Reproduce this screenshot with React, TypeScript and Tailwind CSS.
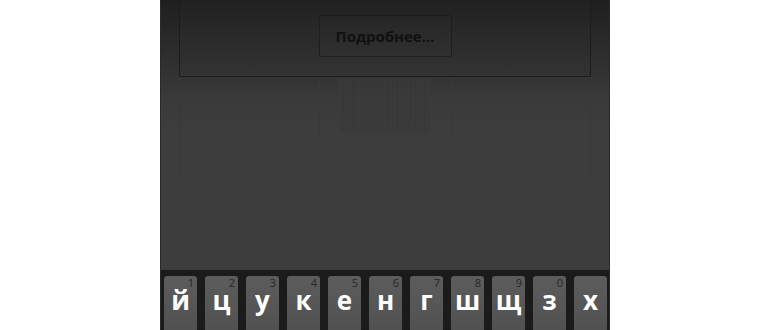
const KEYS = [
	{ ch: "й", num: "1" },
	{ ch: "ц", num: "2" },
	{ ch: "у", num: "3" },
	{ ch: "к", num: "4" },
	{ ch: "е", num: "5" },
	{ ch: "н", num: "6" },
	{ ch: "г", num: "7" },
	{ ch: "ш", num: "8" },
	{ ch: "щ", num: "9" },
	{ ch: "з", num: "0" },
	{ ch: "х", num: "" },
];

export default function App() {
	return (
		<div className="w-[770px] h-[330px] bg-white flex justify-center overflow-hidden" style={{ fontFamily: '"Open Sans", "Noto Sans", sans-serif' }}>
			<div className="w-[450px] h-[330px] flex flex-col border-l border-r border-[#2a2a2a] bg-[#3d3d3d]">
				{/* upper screen */}
				<div className="h-[270px] shrink-0 bg-[linear-gradient(to_bottom,#1f1f1f_0px,#2f2f2f_60px,#3a3a3a_100px,#3d3d3d_130px)] flex flex-col">
					<div className="ml-[18px] w-[412px] h-[77px] shrink-0 border-l border-r border-b border-[#1c1c1c] flex justify-center pt-[15px] bg-[linear-gradient(to_bottom,#212121,#333333)]">
						<button className="w-[133px] h-[42px] border border-[#1e1e1e] rounded-[2px] bg-[linear-gradient(to_bottom,#262626,#303030)] text-[#101010] font-bold text-[15px] leading-none">
							Подробнее...
						</button>
					</div>
					{/* faint reflection */}
					<div className="ml-[18px] w-[412px] h-[97px] border-l border-r border-[#383838] flex justify-center">
						<div className="w-[133px] h-[60px] border-l border-r border-[#393939] flex justify-center">
							<div className="w-[92px] h-[56px] opacity-60 bg-[repeating-linear-gradient(to_right,#3a3a3a_0px,#3a3a3a_4px,#353535_4px,#353535_5px,#3a3a3a_5px,#3a3a3a_8px,#373737_8px,#373737_9px)]" />
						</div>
					</div>
				</div>
				{/* keyboard */}
				<div className="flex-1 bg-[#1b1b1b] pt-[6px] pl-[3px] flex gap-[8px]">
					{KEYS.map((k) => (
						<div
							key={k.ch}
							className="relative w-[33px] h-[60px] shrink-0 rounded-[3px] bg-[linear-gradient(to_bottom,#5c5c5c,#555555_60%,#4f4f4f)] flex justify-center"
						>
							<span className="absolute right-[3px] top-[1px] text-[11px] leading-none text-[#262626]">{k.num}</span>
							<span className="mt-[14px] text-[26px] font-bold leading-[20px] text-white">{k.ch}</span>
						</div>
					))}
				</div>
			</div>
		</div>
	);
}
